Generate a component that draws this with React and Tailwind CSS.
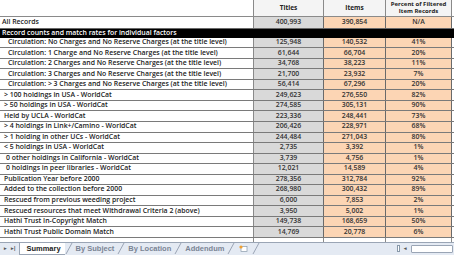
import React from 'react';

const rows = [
    { label: "Circulation: No Charges and No Reserve Charges (at the title level)", pad: "pl-[8px]", t: "125,948", i: "140,532", p: "41%" },
    { label: "Circulation: 1 Charge and No Reserve Charges (at the title level)", pad: "pl-[8px]", t: "61,644", i: "66,704", p: "20%" },
    { label: "Circulation: 2 Charges and No Reserve Charges (at the title level)", pad: "pl-[8px]", t: "34,768", i: "38,223", p: "11%" },
    { label: "Circulation: 3 Charges and No Reserve Charges (at the title level)", pad: "pl-[8px]", t: "21,700", i: "23,932", p: "7%" },
    { label: "Circulation: > 3 Charges and No Reserve Charges (at the title level)", pad: "pl-[8px]", t: "56,414", i: "67,296", p: "20%" },
    { label: "> 100 holdings in USA - WorldCat", pad: "pl-[4px]", t: "249,623", i: "276,550", p: "82%" },
    { label: "> 50 holdings in USA -  WorldCat", pad: "pl-[4px]", t: "274,585", i: "305,131", p: "90%" },
    { label: "Held by UCLA - WorldCat", pad: "pl-[4px]", t: "223,336", i: "248,441", p: "73%" },
    { label: "> 4 holdings in Link+/Camino - WorldCat", pad: "pl-[4px]", t: "206,426", i: "228,971", p: "68%" },
    { label: "> 1 holding in other UCs - WorldCat", pad: "pl-[4px]", t: "244,484", i: "271,043", p: "80%" },
    { label: "< 5 holdings in USA - WorldCat", pad: "pl-[4px]", t: "2,735", i: "3,392", p: "1%" },
    { label: "0 other holdings in California - WorldCat", pad: "pl-[6px]", t: "3,739", i: "4,756", p: "1%" },
    { label: "0 holdings in peer libraries - WorldCat", pad: "pl-[6px]", t: "12,021", i: "14,589", p: "4%" },
    { label: "Publication Year before 2000", pad: "pl-[4px]", t: "278,356", i: "312,784", p: "92%" },
    { label: "Added to the collection before 2000", pad: "pl-[4px]", t: "268,980", i: "300,432", p: "89%" },
    { label: "Rescued from previous weeding project", pad: "pl-[4px]", t: "6,000", i: "7,853", p: "2%" },
    { label: "Rescued resources that meet Withdrawal Criteria 2 (above)", pad: "pl-[4px]", t: "3,950", i: "5,002", p: "1%" },
    { label: "Hathi Trust In-Copyright Match", pad: "pl-[4px]", t: "149,738", i: "168,659", p: "50%" },
    { label: "Hathi Trust Public Domain Match", pad: "pl-[4px]", t: "14,769", i: "20,778", p: "6%" },
];

function Slant() {
    return (
        <svg width="8" height="11" viewBox="0 0 8 11" className="shrink-0">
            <line x1="1" y1="11" x2="7" y2="0" stroke="#9aa5b5" strokeWidth="1" />
        </svg>
    );
}

export default function App() {
    return (
        <div className="w-[454px] h-[255px] bg-white overflow-hidden flex flex-col text-[#222] font-['Open_Sans',sans-serif] font-semibold">
            {/* header */}
            <div className="flex h-[17px] border-b border-[#8a8a8a]">
                <div className="w-[254px] border-r border-[#8a8a8a]"></div>
                <div className="w-[70px] border-r border-[#8a8a8a] bg-[#f4f4f4] flex items-center justify-center text-[6.5px] font-bold">Titles</div>
                <div className="w-[62px] border-r border-[#8a8a8a] bg-[#f4f4f4] flex items-center justify-center text-[6.5px] font-bold">Items</div>
                <div className="w-[66px] border-r border-[#8a8a8a] bg-[#f4f4f4] flex flex-col items-center justify-center text-[6px] font-bold leading-[7px]">
                    <span>Percent of Filtered</span>
                    <span>Item Records</span>
                </div>
            </div>

            {/* all records */}
            <div className="flex h-[12px] border-b border-[#6a6a6a] text-[6.9px]">
                <div className="w-[254px] border-r border-[#8a8a8a] pl-[2px] flex items-center">All Records</div>
                <div className="w-[70px] border-r border-[#6a6a6a] bg-[#d9d9d9] flex items-center justify-center text-[#333]">400,993</div>
                <div className="w-[62px] border-r border-[#6a6a6a] bg-[#fcd5b4] flex items-center justify-center text-[#333]">390,854</div>
                <div className="w-[66px] border-r border-[#6a6a6a] bg-[#fcd5b4] flex items-center justify-center text-[#333]">N/A</div>
            </div>

            {/* section bar */}
            <div className="flex h-[9px] bg-black text-white text-[6.9px]">
                <div className="pl-[2px] flex items-center">Record counts and match rates for individual factors</div>
            </div>

            {/* body */}
            <div className="flex flex-col h-[206px]">
                {rows.map((r, idx) => (
                    <div key={idx} className="flex flex-1 border-b border-[#7a7a7a] text-[6.9px] leading-none">
                        <div className={`w-[254px] border-r border-[#8a8a8a] flex items-center whitespace-nowrap overflow-hidden ${r.pad}`}>{r.label}</div>
                        <div className="w-[70px] border-r border-[#6a6a6a] bg-[#d9d9d9] flex items-center justify-center text-[#333]">{r.t}</div>
                        <div className="w-[62px] border-r border-[#6a6a6a] bg-[#fcd5b4] flex items-center justify-center text-[#333]">{r.i}</div>
                        <div className="w-[66px] border-r border-[#6a6a6a] bg-[#fcd5b4] flex items-center justify-center text-[#333]">{r.p}</div>
                    </div>
                ))}
                <div className="flex h-[4px]">
                    <div className="w-[254px] border-r border-[#8a8a8a]"></div>
                    <div className="w-[70px] border-r border-[#8a8a8a]"></div>
                    <div className="w-[62px] border-r border-[#8a8a8a]"></div>
                    <div className="w-[66px] border-r border-[#8a8a8a]"></div>
                </div>
            </div>

            {/* sheet tabs */}
            <div className="flex-1 flex items-stretch bg-[#e4eaf3] border-t border-[#9aa5b5] text-[7.5px] font-['Liberation_Sans',sans-serif]">
                <div className="flex items-center gap-[4px] pl-[4px] pr-[4px] text-[#555] text-[5px] border-r border-[#9aa5b5]">
                    <span>▸</span>
                    <span>▸|</span>
                </div>
                <div className="flex items-stretch">
                    <div className="flex items-center bg-white pl-[6px] pr-[4px] font-bold text-[#222] border-b border-[#9aa5b5]">Summary</div>
                    <Slant />
                    <div className="flex items-center px-[3px] text-[#7a8494]">By Subject</div>
                    <Slant />
                    <div className="flex items-center px-[3px] text-[#7a8494]">By Location</div>
                    <Slant />
                    <div className="flex items-center px-[3px] text-[#7a8494]">Addendum</div>
                    <Slant />
                    <div className="flex items-center px-[4px]">
                        <svg width="9" height="7" viewBox="0 0 9 7">
                            <rect x="2" y="1.5" width="6" height="5" fill="#fff" stroke="#8899aa" strokeWidth="0.7" />
                            <circle cx="2" cy="2" r="1.6" fill="#f0a030" />
                        </svg>
                    </div>
                    <Slant />
                </div>
                <div className="flex-1"></div>
                <div className="flex items-center gap-[4px] pr-[1px]">
                    <div className="w-[3px] h-[7px] border border-[#8899aa] bg-white"></div>
                    <span className="text-[5px] text-[#555]">◂</span>
                    <div className="w-[42px] h-[8px] border border-[#9aa5b5] bg-white rounded-[1px]"></div>
                </div>
            </div>
        </div>
    );
}
